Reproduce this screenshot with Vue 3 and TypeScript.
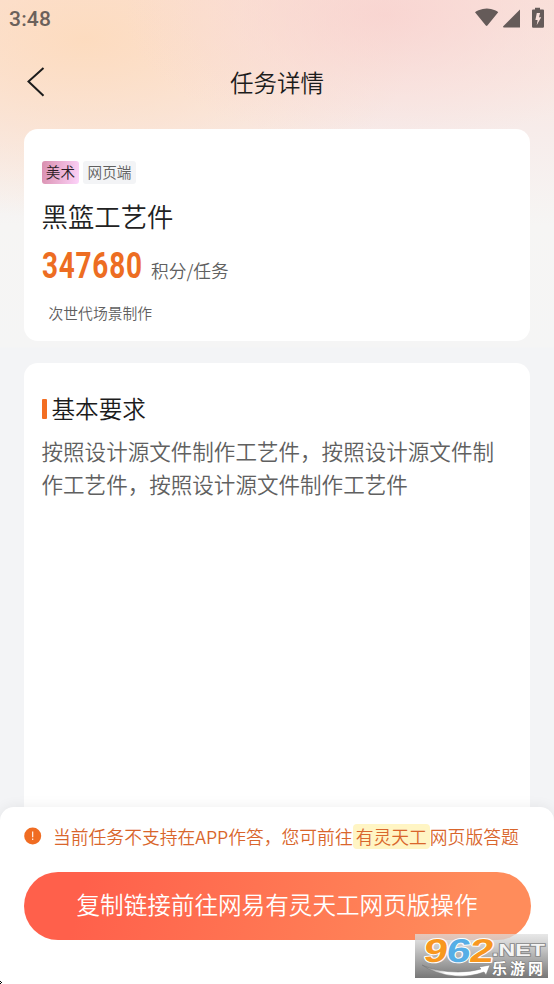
<script setup lang="ts">
interface Task {
  category: string
  platform: string
  name: string
  points: number
  unit: string
  scene: string
  requirement: string
}

const task: Task = {
  category: '美术',
  platform: '网页端',
  name: '黑篮工艺件',
  points: 347680,
  unit: '积分/任务',
  scene: '次世代场景制作',
  requirement: '按照设计源文件制作工艺件，按照设计源文件制作工艺件，按照设计源文件制作工艺件',
}
</script>

<template>
  <main class="page">
    <header class="status">
      <span class="clock">3:48</span>
      <svg class="status-icons" width="72" height="24" viewBox="0 0 72 24" aria-hidden="true">
        <path d="M0 6.2Q1 5 3.5 4.2Q12 0.6 20 4.2Q22.500 5 23.200 6.200L12.400 19.600Q11.600 20.400 10.800 19.600Z" />
        <path d="M45 3.500V21.500H28.500L28 20.500Z" />
        <path
          fill-rule="evenodd"
          d="M60 1.700H65V3.500H68a1 1 0 0 1 1 1V20.500a1.200 1.200 0 0 1-1.200 1.200H58.200A1.200 1.200 0 0 1 57 20.500V4.500a1 1 0 0 1 1-1h2ZM61.800 7L60.400 14H62.600L61.700 19.200L66.200 11.300H64L65.100 7Z"
        />
      </svg>
    </header>

    <nav class="nav">
      <svg class="back" width="20" height="32" viewBox="0 0 20 32" aria-hidden="true">
        <path d="M17.500 2L2.500 15.500L17.500 29.700" />
      </svg>
      <h1>任务详情</h1>
    </nav>

    <section class="card summary">
      <div class="tags">
        <span class="tag art">{{ task.category }}</span>
        <span class="tag">{{ task.platform }}</span>
      </div>
      <h2>{{ task.name }}</h2>
      <div class="reward">
        <span class="points">{{ task.points }}</span>
        <span class="unit">{{ task.unit }}</span>
      </div>
      <p class="scene">{{ task.scene }}</p>
    </section>

    <section class="card detail">
      <h3><i class="bar"></i>基本要求</h3>
      <p>{{ task.requirement }}</p>
    </section>

    <footer class="sheet">
      <div class="notice">
        <svg width="18" height="18" viewBox="0 0 18 18" aria-hidden="true">
          <circle cx="8.700" cy="9" r="8.500" fill="#f06c22" />
          <path d="M8.700 4.500V10.200M8.700 11.600V13" stroke="#fff" stroke-width="1.100" />
        </svg>
        <p>当前任务不支持在APP作答，您可前往<mark>有灵天工</mark>网页版答题</p>
      </div>
      <button type="button">复制链接前往网易有灵天工网页版操作</button>
    </footer>

    <svg class="speck" width="3" height="4" viewBox="0 0 3 4" aria-hidden="true">
      <path d="M0 0H1V1H0ZM1 1H2V2H1ZM0 2H1V4H0Z" />
    </svg>

    <svg class="stamp" width="133" height="44" viewBox="0 0 133 44">
      <defs>
        <linearGradient id="stampShade" x1="0" y1="0" x2="0" y2="1">
          <stop offset="0" stop-color="#dedede" stop-opacity=".72" />
          <stop offset=".45" stop-color="#b4b4b4" stop-opacity=".94" />
          <stop offset="1" stop-color="#777" />
        </linearGradient>
        <linearGradient id="swoosh" x1="0" y1="0" x2="1" y2="0">
          <stop offset="0" stop-color="#777" />
          <stop offset=".35" stop-color="#fff" />
          <stop offset="1" stop-color="#fff" />
        </linearGradient>
      </defs>
      <rect width="133" height="44" fill="url(#stampShade)" />
      <path
        d="M7 31Q22 38 43 38Q56 38 66 35L64 33L75 31L71 41L69 38Q56 43 40 42Q19 40 7 31Z"
        fill="url(#swoosh)"
        stroke="#777"
        stroke-width=".5"
      />
      <g class="digits" transform="translate(7.500 27.500) skewX(-8)">
        <text x="0" y="0" textLength="24" lengthAdjust="spacingAndGlyphs" fill="#f8981f">9</text>
        <text x="23" y="0" textLength="24" lengthAdjust="spacingAndGlyphs" fill="#55aee6">6</text>
        <text x="46" y="0" textLength="24" lengthAdjust="spacingAndGlyphs" fill="#f8981f">2</text>
      </g>
      <text class="net" x="77" y="22" textLength="53" lengthAdjust="spacingAndGlyphs">.NET</text>
      <text class="site" x="77" y="39.500" textLength="51">乐游网</text>
    </svg>
  </main>
</template>

<style>
body {
  margin: 0;
}
</style>

<style scoped>
.page {
  position: relative;
  display: flex;
  flex-direction: column;
  box-sizing: border-box;
  width: 554px;
  height: 984px;
  overflow: hidden;
  font-family: "Noto Sans CJK SC DemiLight", "Noto Sans CJK SC", sans-serif;
  font-weight: 350;
  color: #1c1c1c;
  background:
    radial-gradient(ellipse 260px 130px at 385px 15px, rgba(248, 208, 206, 0.72), rgba(248, 216, 214, 0.42) 55%, rgba(248, 225, 223, 0) 100%) no-repeat,
    radial-gradient(ellipse 330px 180px at 85px 40px, rgba(253, 218, 186, 0.86), rgba(253, 221, 196, 0.55) 50%, rgba(253, 230, 212, 0) 100%) no-repeat,
    linear-gradient(180deg, #fae3db 0, #f9e8e2 70px, #f7ecea 130px, #f6f5f4 225px, #f5f5f5 347px, #f3f4f6 348px);
}

h1,
h2,
h3,
p {
  margin: 0;
  font-weight: inherit;
}

.status {
  display: flex;
  justify-content: space-between;
  height: 38px;
  padding: 6px 7px 0 9px;
  box-sizing: border-box;
  flex: none;
}

.clock {
  font: 500 21px/27px Roboto, sans-serif;
  color: #6b615b;
  letter-spacing: 0.2px;
}

.status-icons {
  fill: #655b59;
}

.nav {
  display: grid;
  grid-template-columns: 60px 1fr 60px;
  align-items: center;
  height: 90px;
  flex: none;
}

.back {
  margin: -3px 0 0 26px;
  fill: none;
  stroke: #1c1c1c;
  stroke-width: 2;
}

h1 {
  text-align: center;
  font-size: 23.5px;
  line-height: 34px;
  margin-top: -3px;
}

.card {
  box-sizing: border-box;
  margin: 0 24px;
  border-radius: 14px;
  background: #fff;
}

.summary {
  flex: none;
  height: 212px;
  margin-top: 1px;
  padding: 32px 17.500px 0;
}

.tags {
  display: flex;
  gap: 4px;
}

.tag {
  height: 23px;
  padding: 0 4.300px;
  border-radius: 3px;
  background: #f3f4f6;
  color: #606060;
  font-size: 14.600px;
  line-height: 22px;
}

.tag.art {
  color: #2b1d25;
  background: linear-gradient(100deg, #d98fae, #fdd3fa);
}

h2 {
  margin-top: 12px;
  font-size: 26.400px;
  line-height: 40px;
  color: #222;
}

.reward {
  display: flex;
  height: 36px;
  margin-top: 12px;
}

.points {
  width: 109.500px;
  font: 700 37px/36px Roboto, sans-serif;
  letter-spacing: 1px;
  color: #ed6d22;
  transform: scaleX(0.755);
  transform-origin: 0 50%;
}

.unit {
  margin-top: 9px;
  font-size: 17.700px;
  line-height: 26px;
  color: #606060;
}

.scene {
  margin: 18px 0 0 7px;
  font-size: 14.800px;
  line-height: 22px;
  color: #606060;
}

.detail {
  flex: 1;
  margin-top: 22px;
  padding: 28px 17.500px 0;
}

h3 {
  display: flex;
  align-items: center;
  gap: 5px;
  font-size: 23.600px;
  line-height: 34px;
}

.bar {
  width: 5px;
  height: 20px;
  margin-top: 2px;
  border-radius: 1px;
  background: #f36e22;
}

.detail p {
  margin-top: 9px;
  font-size: 21.550px;
  line-height: 33px;
  color: #606060;
  word-break: break-all;
}

.sheet {
  position: relative;
  flex: none;
  box-sizing: border-box;
  height: 177px;
  margin-top: -14px;
  padding: 16px 24px 0;
  border-radius: 14px 14px 0 0;
  background: #fff;
  box-shadow: 0 0 14px rgba(0, 0, 0, 0.07);
}

.notice {
  display: flex;
  height: 26px;
  gap: 11px;
  font-size: 17.800px;
  line-height: 26px;
  color: #d9662c;
  white-space: nowrap;
}

.notice svg {
  flex: none;
  margin-top: 4px;
}

mark {
  display: inline-block;
  height: 25px;
  line-height: 25px;
  padding: 0 3px;
  border-radius: 4px;
  background: #fff5c4;
  color: inherit;
}

button {
  display: block;
  width: 507px;
  height: 68px;
  margin: 23px 0 0 -0.500px;
  padding: 0 0 4px;
  border: 0;
  border-radius: 34px;
  background: linear-gradient(105deg, #ff604b 12%, #ff8c5b 88%);
  color: #fff;
  font: inherit;
  font-size: 23.600px;
  line-height: 34px;
}

.speck {
  position: absolute;
  left: 0;
  bottom: -1px;
}

.stamp {
  position: absolute;
  left: 415px;
  top: 934px;
}

.digits text {
  font: 700 33px "Liberation Sans", sans-serif;
  stroke: #fff;
  stroke-width: 2px;
  stroke-linejoin: round;
  paint-order: stroke;
}

.stamp .net {
  font: 700 17px "Liberation Sans", sans-serif;
  fill: #f4f4f4;
  stroke: #888;
  stroke-width: 1.600px;
  paint-order: stroke;
}

.stamp .site {
  font: 700 15px "Noto Sans CJK SC", sans-serif;
  fill: #fff;
  stroke: #777;
  stroke-width: 1px;
  paint-order: stroke;
}
</style>
